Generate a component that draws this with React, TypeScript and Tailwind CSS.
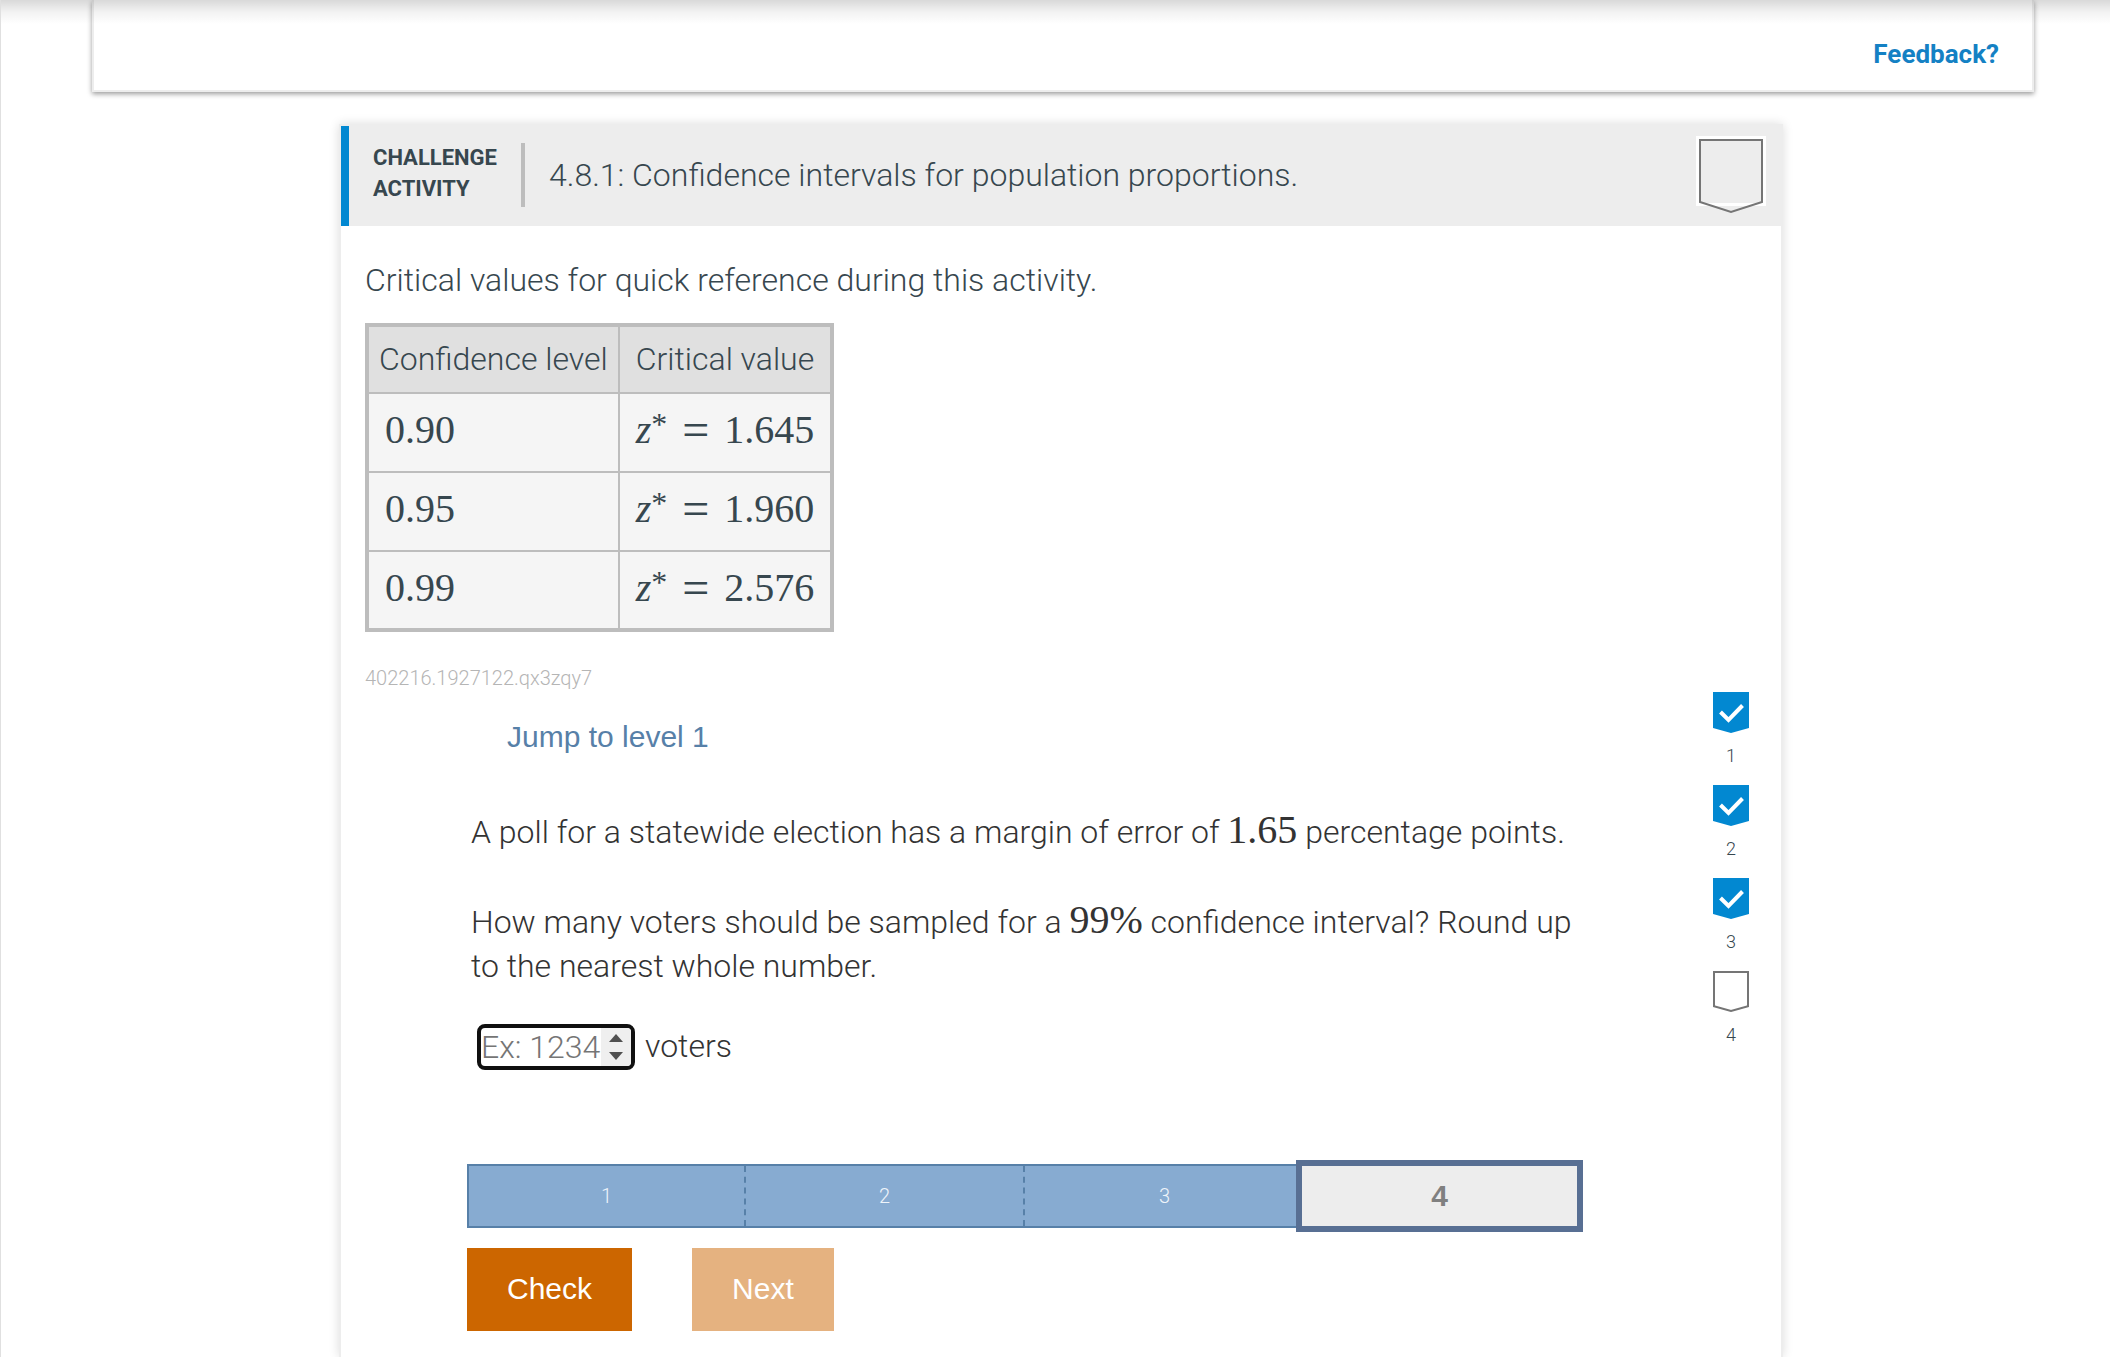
import { useState } from "react";
import type { ReactNode } from "react";

const criticalValues = [
  { level: "0.90", value: "1.645" },
  { level: "0.95", value: "1.960" },
  { level: "0.99", value: "2.576" },
];

const levels = [
  { id: 1, done: true },
  { id: 2, done: true },
  { id: 3, done: true },
  { id: 4, done: false },
];

const currentLevel = 4;

const Num = ({ children }: { children: ReactNode }) => (
  <span className="font-['Liberation_Serif',serif] text-[40px] leading-none font-normal">{children}</span>
);

const Chevron = ({ done }: { done: boolean }) => (
  <svg width="36" height="41" viewBox="0 0 36 41" fill="none" aria-hidden="true">
    {done ? (
      <>
        <path d="M0 0H36V36L18 41L0 36Z" fill="#0288d1" />
        <path d="M7.5 20L15.5 28L29.5 13.5" stroke="#fff" strokeWidth="4" />
      </>
    ) : (
      <path d="M1 1H35V35.3L18 40L1 35.3Z" stroke="#757575" strokeWidth="2" />
    )}
  </svg>
);

const ActivityHeader = () => (
  <header className="flex items-center bg-[#ededed] border-l-8 border-[#0288d1] h-[100px] pb-[2px] pr-[15px]">
    <p className="ml-6 w-[124px] pb-1 text-[22px] leading-[31px] font-bold uppercase">
      Challenge activity
    </p>
    <div className="ml-6 w-1 h-16 bg-[#bdbdbd]" />
    <h1 className="ml-6 flex-1 text-[32px] leading-[44px] font-light">
      4.8.1: Confidence intervals for population proportions.
    </h1>
    <svg width="70" height="79" viewBox="0 0 70 79" fill="none" role="img" aria-label="Activity not completed">
      <path d="M0 0H70V70H0Z" fill="#fff" />
      <path d="M3 3H67V67H3Z" fill="#ededed" />
      <path d="M4 4H66V66L35 76L4 66Z" stroke="#757575" strokeWidth="2" />
    </svg>
  </header>
);

const CriticalTable = () => (
  <table className="mt-[21px] border-collapse border-4 border-[#bdbdbd] bg-[#f5f5f5] text-left">
    <thead>
      <tr className="bg-[#e0e0e0] h-[68px]">
        <th className="w-[251px] border-2 border-[#bdbdbd] px-[10px] pb-[2px] font-light whitespace-nowrap">Confidence level</th>
        <th className="w-[212px] border-2 border-[#bdbdbd] px-4 pb-[2px] font-light whitespace-nowrap">Critical value</th>
      </tr>
    </thead>
    <tbody>
      {criticalValues.map(({ level, value }) => (
        <tr key={level} className="h-[79px]">
          <td className="border-2 border-[#bdbdbd] px-4 pb-[5px]">
            <div className="flex">
              <Num>{level}</Num>
            </div>
          </td>
          <td className="border-2 border-[#bdbdbd] px-4 pb-[5px]">
            <div className="flex items-center justify-between">
              <Num>
                <i>z</i>
                <sup className="text-[32px] -top-2">*</sup>
              </Num>
              <span className="font-['Liberation_Serif',serif] text-[48px] leading-[40px] font-normal">=</span>
              <Num>{value}</Num>
            </div>
          </td>
        </tr>
      ))}
    </tbody>
  </table>
);

const AnswerInput = () => {
  const [answer, setAnswer] = useState("");
  const step = (by: number) => setAnswer(String(Math.max(0, Number(answer) + by)));

  return (
    <div className="mt-9 ml-[10px] flex items-center gap-[10px]">
      <div className="flex w-[158px] h-[46px] overflow-hidden rounded-lg border-4 border-[#101010] bg-white">
        <input
          id="answer"
          type="text"
          inputMode="numeric"
          placeholder="Ex: 1234"
          value={answer}
          onChange={e => setAnswer(e.target.value)}
          className="min-w-0 flex-1 font-light outline-none placeholder:text-[#757575]"
        />
        <div className="flex w-[30px] flex-col bg-[#efefef]">
          <button type="button" aria-label="Increase" onClick={() => step(1)} className="flex flex-1 items-end justify-center pb-[5px]">
            <svg width="14" height="8" viewBox="0 0 14 8"><path d="M0 8L7 0L14 8Z" fill="#505050" /></svg>
          </button>
          <button type="button" aria-label="Decrease" onClick={() => step(-1)} className="flex flex-1 items-start justify-center pt-[5px]">
            <svg width="14" height="8" viewBox="0 0 14 8"><path d="M0 0L7 8L14 0Z" fill="#505050" /></svg>
          </button>
        </div>
      </div>
      <label htmlFor="answer" className="pb-[2px]">voters</label>
    </div>
  );
};

const ProgressBar = () => (
  <ol className="mt-[90px] grid h-[72px] grid-cols-4 items-center">
    {levels.map(({ id }, i) =>
      id === currentLevel ? (
        <li
          key={id}
          aria-current="step"
          className="-ml-2 flex h-[72px] items-center justify-center border-[6px] border-[#586f93] bg-[#ededed] font-['Liberation_Sans',sans-serif] text-[30px] font-bold text-[#808080]"
        >
          {id}
        </li>
      ) : (
        <li
          key={id}
          className={`flex h-16 border-y-2 border-[#5780a8] bg-[#87abd1] text-[20px] text-[#eef4fa] ${i === 0 ? "border-l-2" : ""}`}
        >
          <span
            className={`flex flex-1 items-center justify-center ${i < 2 ? "border-r-2 border-dashed border-[#5780a8]" : ""}`}
          >
            {id}
          </span>
        </li>
      )
    )}
  </ol>
);

export default function App() {
  return (
    <div className="relative flex min-h-screen flex-col border-l border-[#e0e0e0] bg-white font-[Roboto,sans-serif] text-[32px] leading-[44px] font-light text-[#37474f]">
      <div className="absolute inset-x-0 top-0 h-6 bg-linear-to-b from-black/15 via-black/5 to-transparent" />

      <section className="ml-[91px] mr-[76px] flex h-[92px] items-end justify-end border-2 border-t-0 border-[#ededed] pb-[14px] pr-[33px] shadow-[0_2px_5px_rgba(0,0,0,0.4)]">
        <a href="#feedback" className="text-[26px] font-bold text-[#1481c4]">
          Feedback?
        </a>
      </section>

      <div className="mt-8 flex flex-1 flex-col pl-[90px] pr-[79px]">
        <main className="mx-auto w-full max-w-[1444px] flex-1 border-2 border-b-0 border-[#ededed] shadow-[0_0_10px_rgba(0,0,0,0.14)]">
          <ActivityHeader />
          <div className="pt-8 pl-6 pr-8">
            <p>Critical values for quick reference during this activity.</p>
            <CriticalTable />
            <p className="mt-8 text-[20px] leading-[28px] text-[#b5b5b5]">402216.1927122.qx3zqy7</p>

            <div className="flex justify-between">
              <section className="ml-[102px] w-full max-w-[1116px] pt-[23px] text-[#333]">
                <button
                  type="button"
                  className="block px-10 font-['Liberation_Sans',sans-serif] text-[30px] leading-[44px] font-normal text-[#5780a8]"
                >
                  Jump to level 1
                </button>
                <div className="mt-[51px] pl-1">
                  <p>
                    A poll for a statewide election has a margin of error of <Num>1.65</Num> percentage points.
                  </p>
                  <p className="mt-[46px]">
                    How many voters should be sampled for a <Num>99%</Num> confidence interval? Round up to the nearest
                    whole number.
                  </p>
                </div>
                <AnswerInput />
                <ProgressBar />
                <div className="mt-4 flex gap-[60px] font-['Liberation_Sans',sans-serif] text-[30px] font-normal text-white">
                  <button type="button" className="h-[83px] bg-[#cc6600] px-10 pb-[2px]">
                    Check
                  </button>
                  <button type="button" disabled className="h-[83px] bg-[#e5b280] px-10 pb-[2px]">
                    Next
                  </button>
                </div>
              </section>

              <ol className="flex flex-col text-[18px] leading-[30px] text-[#37474f]">
                {levels.map(({ id, done }) => (
                  <li key={id} className="flex h-[93px] w-9 flex-col items-center gap-2">
                    <Chevron done={done} />
                    {id}
                  </li>
                ))}
              </ol>
            </div>
          </div>
        </main>
      </div>
    </div>
  );
}
